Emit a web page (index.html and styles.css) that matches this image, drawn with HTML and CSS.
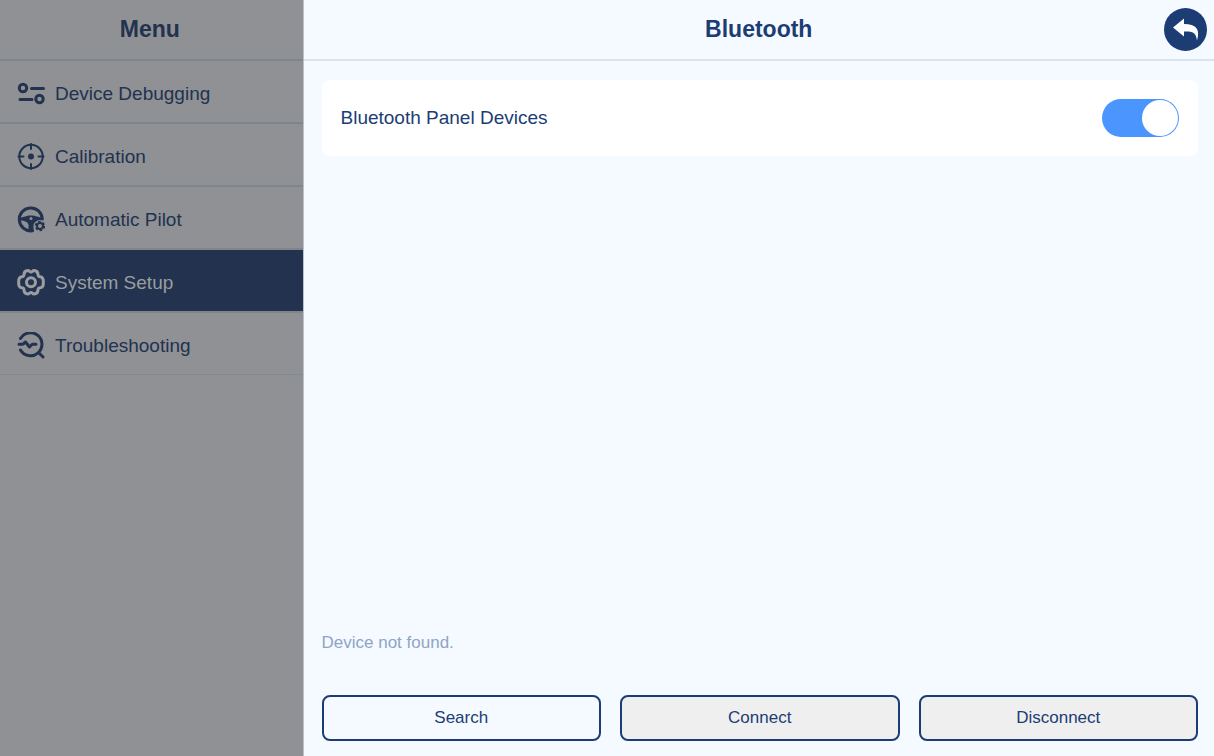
FILE: index.html
```html
<!DOCTYPE html>
<html lang="en">
<head>
    <meta charset="UTF-8">
    <meta name="viewport" content="width=device-width, initial-scale=1.0">
    <title>Bluetooth</title>
    <link rel="stylesheet" href="styles.css">
</head>
<body>
    <aside class="sidebar">
        <h2 class="title">Menu</h2>
        <nav class="menu">
            <a href="#debugging">
                <svg class="icon" viewBox="0 0 28 28">
                    <circle cx="6" cy="8" r="3.7"/>
                    <circle cx="22.5" cy="19" r="3.7"/>
                    <path d="M14.5 8.5h12M3 19.5h12"/>
                </svg>
                Device Debugging
            </a>
            <a href="#calibration">
                <svg class="icon thin" viewBox="0 0 28 28">
                    <circle cx="14" cy="13.5" r="11.7"/>
                    <circle class="solid" cx="14" cy="13.5" r="3"/>
                    <path d="M14 1v5M14 21v5M1.500 13.500h5M21.500 13.500h5"/>
                </svg>
                Calibration
            </a>
            <a href="#pilot">
                <svg class="icon" viewBox="0 0 28 28">
                    <path d="M15.5 24.800A11.500 11.500 0 1 1 25.300 13"/>
                    <path class="solid" d="M2.500 11.500C7 11.500 9 9.500 14 9.500s7 2 11.500 2v3C20 14.500 17 16 16.500 19v6.500h-5V19C11 16 8 14.500 2.500 14.500z"/>
                    <circle class="hole" cx="14" cy="12.500" r="1.500"/>
                    <circle class="gap" cx="23" cy="20" r="6"/>
                    <circle class="teeth" cx="23" cy="20" r="4.200"/>
                    <circle class="rim" cx="23" cy="20" r="3"/>
                </svg>
                Automatic Pilot
            </a>
            <a href="#setup" class="active">
                <svg class="icon" viewBox="0 0 28 28">
                    <path d="M11 1.500C12.500 1.500 12.500 3 14 3S15.500 1.500 17 1.500C19.500 1.700 21 3 21 5.500C21.100 7 21.500 7.700 23 7.700C25.500 8 26.500 10.500 26.300 13.300C26.500 16 25.500 18.500 23 18.800C21.500 18.800 21.100 19.500 21 21C21 23.500 19.500 24.800 17 25C15.500 25 15.500 23.500 14 23.500S12.500 25 11 25C8.500 24.800 7 23.500 7 21C6.900 19.500 6.500 18.800 5 18.800C2.500 18.500 1.500 16 1.700 13.300C1.500 10.500 2.500 8 5 7.700C6.500 7.700 6.900 7 7 5.500C7 3 8.500 1.700 11 1.500z"/>
                    <circle cx="14" cy="13.300" r="4.500"/>
                </svg>
                System Setup
            </a>
            <a href="#troubleshooting">
                <svg class="icon" viewBox="0 0 28 28">
                    <path d="M3.500 6.500A11.500 11.500 0 1 1 3.500 18M21.500 20.500l4.500 4.500"/>
                    <path d="M2 12.200h4L8.500 10l4 5 2.800-2.800H19"/>
                </svg>
                Troubleshooting
            </a>
        </nav>
    </aside>

    <main class="panel">
        <header class="panel-header">
            <h1 class="title">Bluetooth</h1>
            <button type="button" class="back" aria-label="Back">
                <svg viewBox="0 0 43 43">
                    <path d="M9 19.500L20 10.500v5.500C32 16 36.500 21 33 32.500C32 25 29.500 23 20 23.500v5z"/>
                </svg>
            </button>
        </header>

        <section class="content">
            <div class="card">
                <label for="panel-devices">Bluetooth Panel Devices</label>
                <input type="checkbox" id="panel-devices" class="switch" role="switch" checked>
            </div>
            <p class="status">Device not found.</p>
            <div class="actions">
                <button type="button" class="search">Search</button>
                <button type="button">Connect</button>
                <button type="button">Disconnect</button>
            </div>
        </section>
    </main>
</body>
</html>
```

FILE: styles.css
```css
* {
    box-sizing: border-box;
}
body {
    display: flex;
    min-height: 100vh;
    margin: 0;
    font-family: Arial, "Liberation Sans", sans-serif;
    font-size: 19px;
    color: #1c3d74;
    background-color: #f4faff;
}
.title {
    margin: 0;
    height: 61px;
    font-size: 23px;
    line-height: 59px;
    text-align: center;
    border-bottom: 2px solid #d9e4ee;
}

/* sidebar, dimmed while a panel is open */
.sidebar {
    flex: 0 0 25%;
    color: #22324f;
    background-color: #8f9194;
    border-right: 1px solid #b9c1c9;
}
.sidebar .title {
    padding-right: 3px;
    border-color: #7e858b;
}
.menu a {
    display: flex;
    align-items: center;
    gap: 10px;
    height: 63px;
    padding: 4px 17px 0;
    color: #22324f;
    text-decoration: none;
    border-bottom: 2px solid #7e858b;
}
.menu a:last-child {
    height: 62px;
    border-bottom: 1px solid #84898e;
}
.menu .active {
    color: #9b9da1;
    background-color: #22324f;
    background-clip: padding-box;
}
.icon {
    width: 28px;
    height: 28px;
    fill: none;
    stroke: currentColor;
    stroke-width: 3;
    stroke-linecap: round;
    stroke-linejoin: round;
}
.icon.thin,
.icon .rim {
    stroke-width: 2;
}
.icon .solid {
    fill: currentColor;
    stroke: none;
}
.icon .hole,
.icon .gap {
    fill: #8f9194;
    stroke: none;
}
.icon .teeth {
    stroke-width: 2;
    stroke-dasharray: 2.4 2;
    stroke-linecap: butt;
}

/* panel */
.panel {
    flex: 1;
    display: flex;
    flex-direction: column;
}
.panel-header {
    position: relative;
}
.back {
    position: absolute;
    top: 8px;
    right: 7px;
    width: 43px;
    height: 43px;
    padding: 0;
    border: none;
    border-radius: 50%;
    background-color: #1c3d74;
    cursor: pointer;
}
.back svg {
    display: block;
    fill: #fff;
}
.content {
    flex: 1;
    display: flex;
    flex-direction: column;
    padding: 19px 16px 15px 18px;
}
.card {
    display: flex;
    align-items: center;
    justify-content: space-between;
    height: 76px;
    padding: 0 19px;
    background-color: #fff;
    border-radius: 8px;
}
.switch {
    appearance: none;
    width: 77px;
    height: 38px;
    margin: 0;
    padding: 1px;
    border-radius: 19px;
    background-color: #b9c1c9;
    cursor: pointer;
}
.switch::before {
    content: "";
    display: block;
    width: 36px;
    height: 36px;
    border-radius: 50%;
    background-color: #fff;
}
.switch:checked {
    background-color: #4b95ff;
}
.switch:checked::before {
    margin-left: auto;
}
.status {
    margin: auto 0 42px;
    font-size: 17px;
    line-height: 20px;
    color: #8fa4c9;
}
.actions {
    display: grid;
    grid-template-columns: repeat(3, 1fr);
    gap: 19px;
}
.actions button {
    height: 46px;
    font-family: inherit;
    font-size: 17px;
    color: #1c3d74;
    background-color: #efefef;
    border: 2px solid #1c3d74;
    border-radius: 8px;
    cursor: pointer;
}
.actions .search {
    background-color: #f4faff;
}
```
